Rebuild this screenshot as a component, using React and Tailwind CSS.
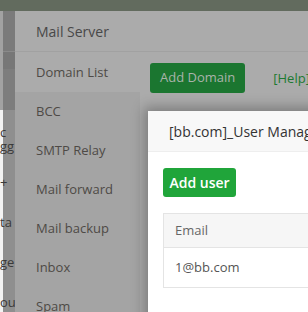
import React from "react";

const menu = ["Domain List", "BCC", "SMTP Relay", "Mail forward", "Mail backup", "Inbox", "Spam"];

/* ghost fragments of the page behind both dialogs (left edge) */
const ghostRows = [
  { top: 126, text: "c" },
  { top: 140, text: "gg" },
  { top: 176, text: "+" },
  { top: 216, text: "ta" },
  { top: 256, text: "ge" },
  { top: 296, text: "out" },
];

function UserManage() {
  return (
    <div className="absolute left-[148px] top-[111px] w-[200px] h-[240px] bg-white shadow-[0_0_12px_4px_rgba(0,0,0,0.28)]">
      <div className="h-[41px] bg-[#f8f8f8] border-b border-[#eeeeee] flex items-center pl-[21px] whitespace-nowrap overflow-hidden text-[14px] text-[#333]">
        [bb.com]_User Management
      </div>
      <div className="pl-[15px] pt-[16px]">
        <button className="h-[29px] w-[73px] rounded-[3px] bg-[#20a53a] text-white text-[14px] font-semibold flex items-center justify-center">
          Add user
        </button>
        <div className="mt-[16px] border border-[#e4e4e4] border-r-0">
          <div className="h-[34px] bg-[#f6f6f6] border-b border-[#e4e4e4] flex items-center pl-[11px] text-[13px] text-[#666]">
            Email
          </div>
          <div className="h-[39px] flex items-center pl-[11px] text-[13px] text-[#555]">1@bb.com</div>
        </div>
      </div>
    </div>
  );
}

export default function App() {
  return (
    <div
      className="relative w-[308px] h-[312px] overflow-hidden bg-[#ababab]"
      style={{ fontFamily: '"Open Sans", "Noto Sans", sans-serif' }}
    >
      <div className="h-[11px] bg-[#626b5e]" />
      <div className="flex h-[301px]">
        {/* page behind, seen at the left edge */}
        <div className="relative w-[15px] shrink-0 flex overflow-hidden">
          <div className="w-[3px] flex flex-col">
            <div className="h-[99px] bg-[#a2a2a2]" />
            <div className="flex-1 bg-[#f3f3f3]" />
          </div>
          <div className="flex-1 flex flex-col">
            <div className="h-[41px] bg-[#7b7b7b] border-b border-[#8a8a8a]" />
            <div className="h-[17px] bg-[#777]" />
            <div className="h-[41px] bg-[#7d7d7d]" />
            <div className="flex-1 bg-[#8f8f8f]" />
          </div>
          {ghostRows.map((r) => (
            <div
              key={r.top}
              className="absolute left-0 text-[13px] leading-none text-[#3a3a3a] whitespace-nowrap"
              style={{ top: r.top - 11 }}
            >
              {r.text}
            </div>
          ))}
        </div>

        {/* Mail Server dialog (dimmed) */}
        <div className="flex-1 flex flex-col bg-[#ababab] overflow-hidden">
          <div className="h-[41px] shrink-0 border-b border-[#a1a1a1] flex items-center pl-[21px] text-[14px] text-[#484848] whitespace-nowrap">
            Mail Server
          </div>
          <div className="flex-1 flex overflow-hidden">
            <div className="w-[125px] shrink-0 bg-[#a4a4a4] flex flex-col">
              {menu.map((m, i) => (
                <div
                  key={m}
                  className={`h-[39px] shrink-0 flex items-center pl-[21px] text-[13px] text-[#4e4a46] whitespace-nowrap ${
                    i === 0 ? "bg-[#ababab] h-[40px] pt-[1px]" : ""
                  }`}
                >
                  {m}
                </div>
              ))}
            </div>
            <div className="flex-1 pl-[10px] pt-[11px] flex items-start gap-[28px] whitespace-nowrap">
              <button className="h-[30px] px-[10px] rounded-[3px] bg-[#1b7630] text-[#aab3ab] text-[13px]">
                Add Domain
              </button>
              <span className="mt-[6px] text-[13px] text-[#1c7a31]">[Help]</span>
            </div>
          </div>
        </div>
      </div>
      <UserManage />
    </div>
  );
}
